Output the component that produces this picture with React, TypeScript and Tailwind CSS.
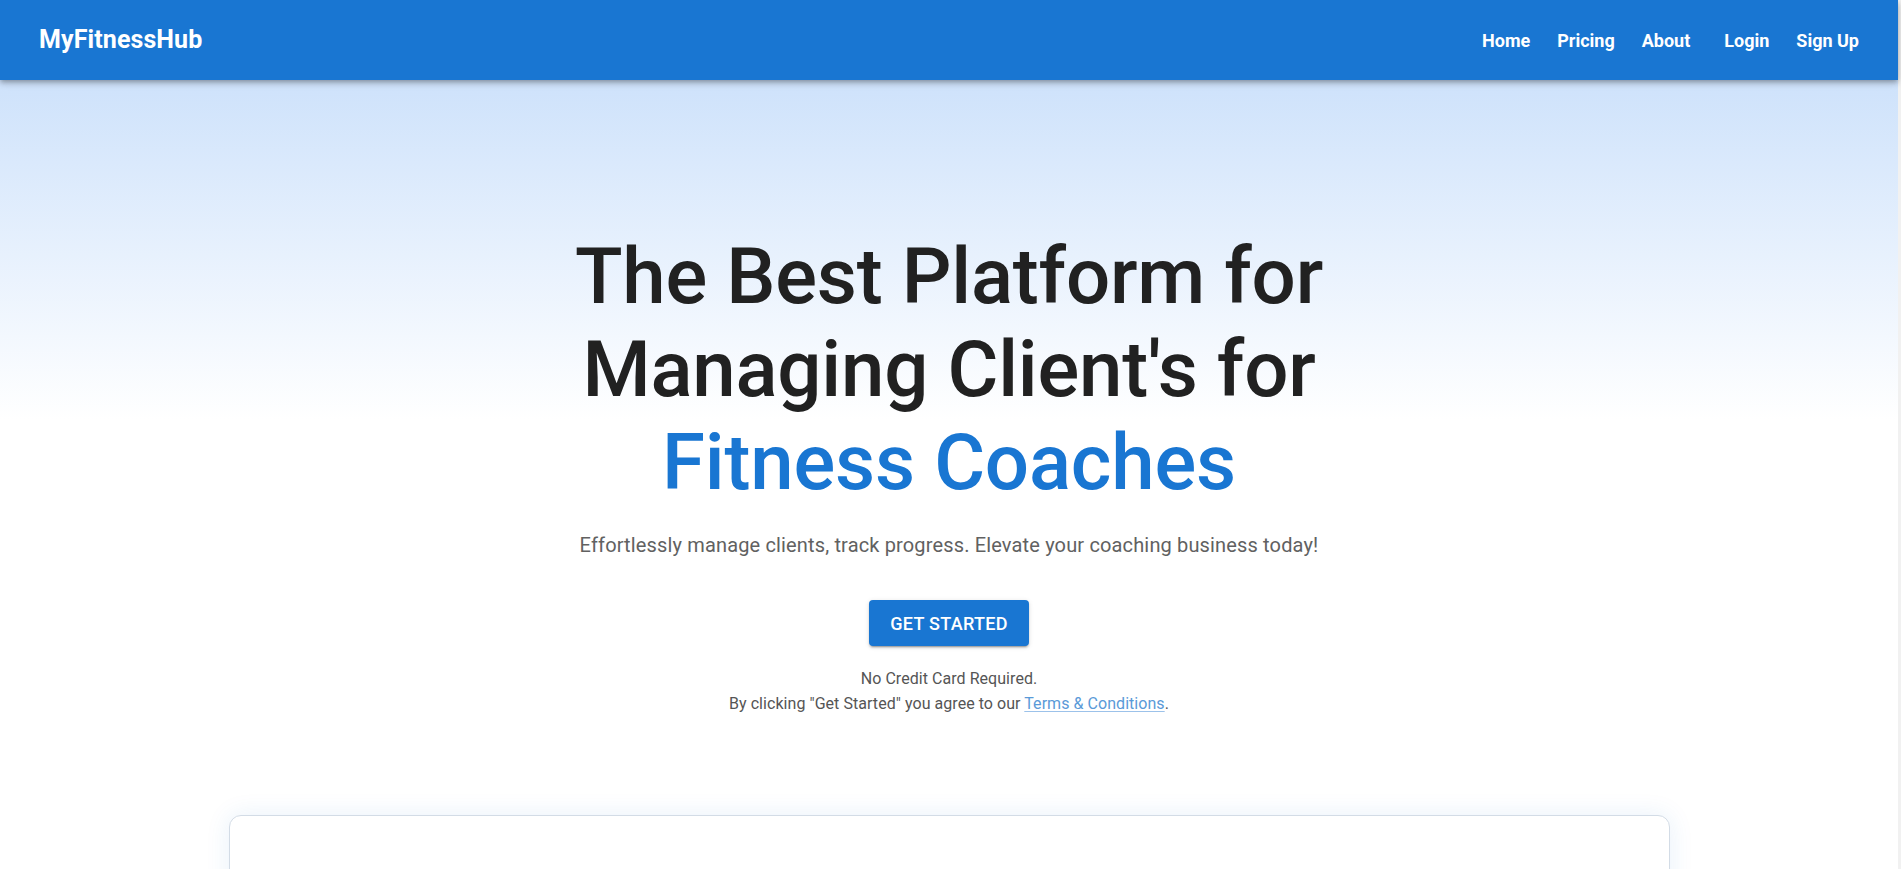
import React from 'react';

interface NavLink {
  name: string;
  href: string;
}

const navLinks: NavLink[] = [
  { name: 'Home', href: '#home' },
  { name: 'Pricing', href: '#pricing' },
  { name: 'About', href: '#about' },
  { name: 'Login', href: '#login' },
  { name: 'Sign Up', href: '#signup' },
];

const Header: React.FC = () => (
  <header className="h-[80px] bg-[#1976d2] text-white flex items-center justify-between pl-[39px] pr-[39px] shadow-[0_2px_4px_-1px_rgba(0,0,0,0.2),0_4px_5px_0_rgba(0,0,0,0.14),0_1px_10px_0_rgba(0,0,0,0.12)] relative z-10">
    <a href="#home" className="text-[25px] font-bold tracking-[0.1px]">
      MyFitnessHub
    </a>
    <nav className="flex items-center gap-[27px]">
      {navLinks.map((link) => (
        <a
          key={link.name}
          href={link.href}
          className={`text-[18px] font-bold ${link.name === 'Login' ? 'ml-[7px]' : ''}`}
        >
          {link.name}
        </a>
      ))}
    </nav>
  </header>
);

const Hero: React.FC = () => (
  <section className="flex flex-col items-center text-center pt-[150px]">
    <h1 className="text-[78px] leading-[93px] font-medium text-[#212121] tracking-[-0.2px]">
      The Best Platform for
      <br />
      Managing Client's for
      <br />
      <span className="text-[#1976d2]">Fitness Coaches</span>
    </h1>
    <p className="mt-[21px] text-[20px] leading-[30px] text-[#616161] tracking-[0.15px]">
      Effortlessly manage clients, track progress. Elevate your coaching business today!
    </p>
    <a
      href="#signup"
      className="mt-[40px] h-[46px] px-[21px] flex items-center rounded-[4px] bg-[#1976d2] text-white text-[18px] font-medium uppercase tracking-[0.3px] shadow-[0_3px_1px_-2px_rgba(0,0,0,0.2),0_2px_2px_0_rgba(0,0,0,0.14),0_1px_5px_0_rgba(0,0,0,0.12)]"
    >
      Get Started
    </a>
    <div className="mt-[20px] text-[16px] leading-[25px] text-[#555555] tracking-[0.05px]">
      <div>No Credit Card Required.</div>
      <div>
        By clicking "Get Started" you agree to our{' '}
        <a href="#terms" className="text-[#5a9ad8] underline decoration-[#9cc2ea] underline-offset-2">
          Terms &amp; Conditions
        </a>
        .
      </div>
    </div>
  </section>
);

export default function App() {
  return (
    <div className="flex min-h-screen font-['Roboto',sans-serif]">
      <div className="flex-1 bg-[linear-gradient(to_bottom,#cee2fb_80px,#ffffff_420px)]">
        <Header />
        <Hero />
        <div className="mt-[99px] mx-auto w-[1441px] h-[400px] rounded-[12px] border border-[#d3dce6] bg-white shadow-[0_0_24px_rgba(25,118,210,0.1)]" />
      </div>
      <div className="w-[3px] bg-[#f1f1f1]" />
    </div>
  );
}
